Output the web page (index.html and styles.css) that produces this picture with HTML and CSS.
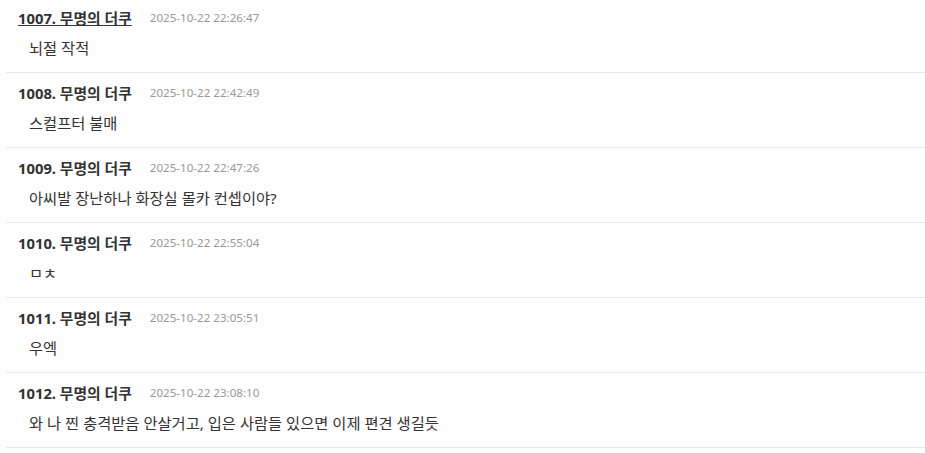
FILE: index.html
```html
<!DOCTYPE html>
<html lang="ko">
<head>
<meta charset="utf-8">
<link rel="stylesheet" href="styles.css">
</head>
<body>
<ul class="list">
  <li class="item">
    <div class="head"><a class="name hover">1007. 무명의 더쿠</a><span class="date">2025-10-22 22:26:47</span></div>
    <div class="body">뇌절 작적</div>
  </li>
  <li class="item">
    <div class="head"><a class="name">1008. 무명의 더쿠</a><span class="date">2025-10-22 22:42:49</span></div>
    <div class="body">스컬프터 불매</div>
  </li>
  <li class="item">
    <div class="head"><a class="name">1009. 무명의 더쿠</a><span class="date">2025-10-22 22:47:26</span></div>
    <div class="body">아씨발 장난하나 화장실 몰카 컨셉이야?</div>
  </li>
  <li class="item">
    <div class="head"><a class="name">1010. 무명의 더쿠</a><span class="date">2025-10-22 22:55:04</span></div>
    <div class="body">ㅁㅊ</div>
  </li>
  <li class="item">
    <div class="head"><a class="name">1011. 무명의 더쿠</a><span class="date">2025-10-22 23:05:51</span></div>
    <div class="body">우엑</div>
  </li>
  <li class="item">
    <div class="head"><a class="name">1012. 무명의 더쿠</a><span class="date">2025-10-22 23:08:10</span></div>
    <div class="body">와 나 찐 충격받음 안살거고, 입은 사람들 있으면 이제 편견 생길듯</div>
  </li>
</ul>
</body>
</html>
```
FILE: styles.css
```css
html, body {
  margin: 0;
  padding: 0;
  background: #fdfdfd;
  font-family: "Noto Sans", "Noto Sans CJK KR", sans-serif;
  color: #333;
}
.list {
  list-style: none;
  margin: -2px 0 0 0;
  padding: 0 0 0 6px;
}
.item {
  padding: 10px 0 14px 12px;
  border-bottom: 1px solid #e9e9e9;
}
.head {
  display: flex;
  align-items: center;
  height: 20px;
}
.name {
  font-size: 14.8px;
  font-weight: 700;
  color: #333;
  line-height: 20px;
  text-decoration: none;
}
.name.hover {
  text-decoration: underline;
}
.date {
  margin-left: 18px;
  font-size: 11.6px;
  color: #999;
  line-height: 20px;
}
.body {
  margin-top: 10px;
  padding-left: 11px;
  font-size: 15.3px;
  line-height: 20px;
  color: #333;
}
```
